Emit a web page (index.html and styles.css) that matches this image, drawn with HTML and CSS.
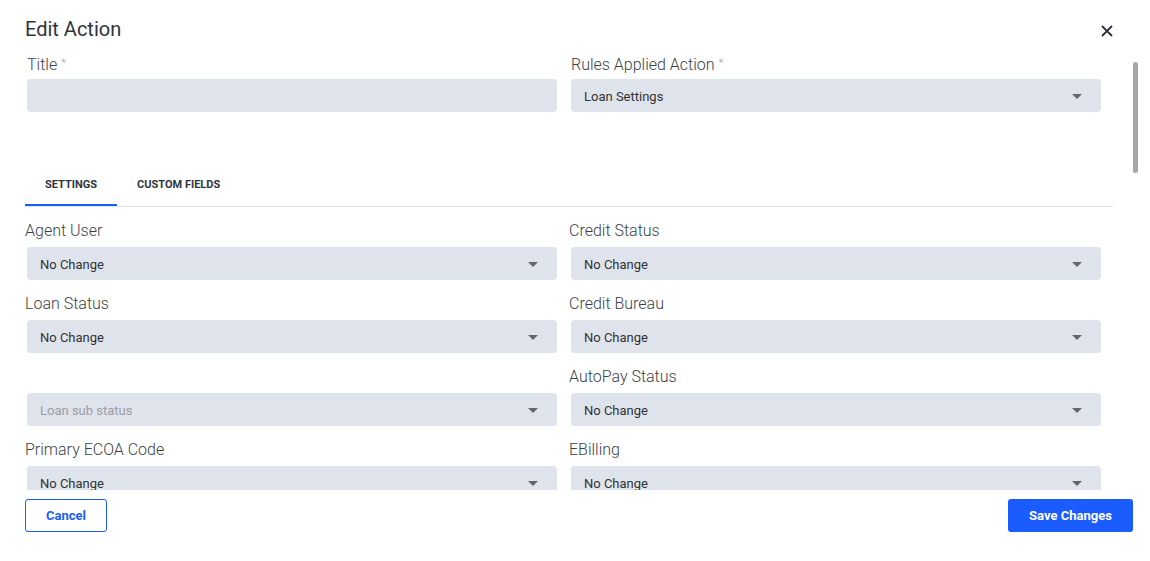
FILE: index.html
```html
<!DOCTYPE html>
<html>
<head>
<meta charset="utf-8">
<link rel="stylesheet" href="styles.css">
</head>
<body>
<div class="dialog">
  <div class="header">
    <h1 class="title">Edit Action</h1>
    <button class="close" aria-label="Close">
      <svg width="12" height="12" viewBox="0 0 12 12"><path d="M1 1L11 11M11 1L1 11" stroke="#2b2f38" stroke-width="1.8" fill="none"/></svg>
    </button>
  </div>
  <div class="body">
    <div class="top-grid">
      <div class="field">
        <label class="label">Title <span class="req">*</span></label>
        <div class="input"></div>
      </div>
      <div class="field">
        <label class="label">Rules Applied Action <span class="req">*</span></label>
        <div class="select"><span>Loan Settings</span><svg class="caret" width="10" height="5" viewBox="0 0 10 5"><path d="M0 0H10L5 5Z" fill="#666"/></svg></div>
      </div>
    </div>
    <div class="tabs">
      <div class="tab active">SETTINGS</div>
      <div class="tab">CUSTOM FIELDS</div>
    </div>
    <div class="grid">
      <div class="cell"><div class="glabel">Agent User</div><div class="select"><span>No Change</span><svg class="caret" width="10" height="5" viewBox="0 0 10 5"><path d="M0 0H10L5 5Z" fill="#666"/></svg></div></div>
      <div class="cell"><div class="glabel">Credit Status</div><div class="select"><span>No Change</span><svg class="caret" width="10" height="5" viewBox="0 0 10 5"><path d="M0 0H10L5 5Z" fill="#666"/></svg></div></div>
      <div class="cell"><div class="glabel">Loan Status</div><div class="select"><span>No Change</span><svg class="caret" width="10" height="5" viewBox="0 0 10 5"><path d="M0 0H10L5 5Z" fill="#666"/></svg></div></div>
      <div class="cell"><div class="glabel">Credit Bureau</div><div class="select"><span>No Change</span><svg class="caret" width="10" height="5" viewBox="0 0 10 5"><path d="M0 0H10L5 5Z" fill="#666"/></svg></div></div>
      <div class="cell"><div class="glabel"></div><div class="select"><span class="ph">Loan sub status</span><svg class="caret" width="10" height="5" viewBox="0 0 10 5"><path d="M0 0H10L5 5Z" fill="#666"/></svg></div></div>
      <div class="cell"><div class="glabel">AutoPay Status</div><div class="select"><span>No Change</span><svg class="caret" width="10" height="5" viewBox="0 0 10 5"><path d="M0 0H10L5 5Z" fill="#666"/></svg></div></div>
      <div class="cell"><div class="glabel">Primary ECOA Code</div><div class="select"><span>No Change</span><svg class="caret" width="10" height="5" viewBox="0 0 10 5"><path d="M0 0H10L5 5Z" fill="#666"/></svg></div></div>
      <div class="cell"><div class="glabel">EBilling</div><div class="select"><span>No Change</span><svg class="caret" width="10" height="5" viewBox="0 0 10 5"><path d="M0 0H10L5 5Z" fill="#666"/></svg></div></div>
    </div>
    <div class="thumb"></div>
  </div>
  <div class="footer">
    <button class="btn btn-outline">Cancel</button>
    <button class="btn btn-primary">Save Changes</button>
  </div>
</div>
</body>
</html>
```
FILE: styles.css
```css
* { box-sizing: border-box; }
html, body { margin: 0; padding: 0; background: #fff; }
body { font-family: Roboto, "Liberation Sans", Arial, sans-serif; color: #333; }

.dialog { width: 1150px; height: 561px; position: relative; overflow: hidden; }

.header {
  display: flex;
  justify-content: space-between;
  align-items: flex-start;
  padding: 17px 31px 0 25px;
  height: 45px;
}
.title {
  margin: 0;
  font-size: 20px;
  line-height: 24px;
  font-weight: 400;
  color: #2f3440;
}
.close {
  width: 24px; height: 24px;
  margin-top: 2px;
  border: 0; background: none; padding: 0;
  display: flex; align-items: center; justify-content: center;
}

.body {
  height: 445px;
  overflow: hidden;
  padding: 6px 37px 0 25px;
}
.thumb {
  position: absolute;
  left: 1133px; top: 62px;
  width: 5px; height: 111px;
  border-radius: 3px;
  background: #a6a6a6;
}

.top-grid {
  display: grid;
  grid-template-columns: 530px 530px;
  column-gap: 14px;
  padding-left: 2px;
}
.label {
  display: block;
  font-size: 16px;
  line-height: 24px;
  font-weight: 300;
  color: #3a3f4a;
}
.req { color: #a9adb5; font-size: 12px; vertical-align: 3px; }
.input, .select {
  height: 33px;
  background: #dfe3eb;
  border-radius: 4px;
}
.field .input, .field .select { margin-top: 2px; }

.select {
  display: flex;
  align-items: center;
  justify-content: space-between;
  padding: 2px 19px 0 13px;
  font-size: 13px;
  color: #333;
}
.select .ph { color: #9a9ea6; }
.caret { display: block; }

.tabs {
  display: flex;
  margin-top: 54px;
  border-bottom: 1px solid #e3e4e7;
}
.tab {
  padding: 0 20px;
  height: 40px;
  line-height: 38px;
  font-size: 11px;
  font-weight: 700;
  color: #2f3440;
  border-bottom: 2px solid transparent;
}
.tab.active { border-bottom-color: #1a5cff; }

.grid {
  display: grid;
  grid-template-columns: 534px 534px;
  column-gap: 10px;
  margin-top: 11px;
}
.cell { padding-bottom: 11px; }
.glabel {
  height: 24px;
  padding-top: 1px;
  font-size: 16px;
  line-height: 24px;
  font-weight: 300;
  color: #3a3f4a;
}
.cell .select { margin: 5px 2px 0 2px; }

.footer {
  display: flex;
  justify-content: space-between;
  padding: 9px 17px 0 25px;
}
.btn {
  height: 33px;
  border-radius: 3px;
  font-family: Roboto, "Liberation Sans", Arial, sans-serif;
  font-size: 13px;
  font-weight: 700;
  padding: 0;
  cursor: pointer;
}
.btn-outline {
  background: #fff;
  color: #1a5cff;
  border: 1px solid #1a5cff;
  width: 82px;
}
.btn-primary {
  background: #1a5cff;
  color: #fff;
  border: 0;
  width: 125px;
}
```
